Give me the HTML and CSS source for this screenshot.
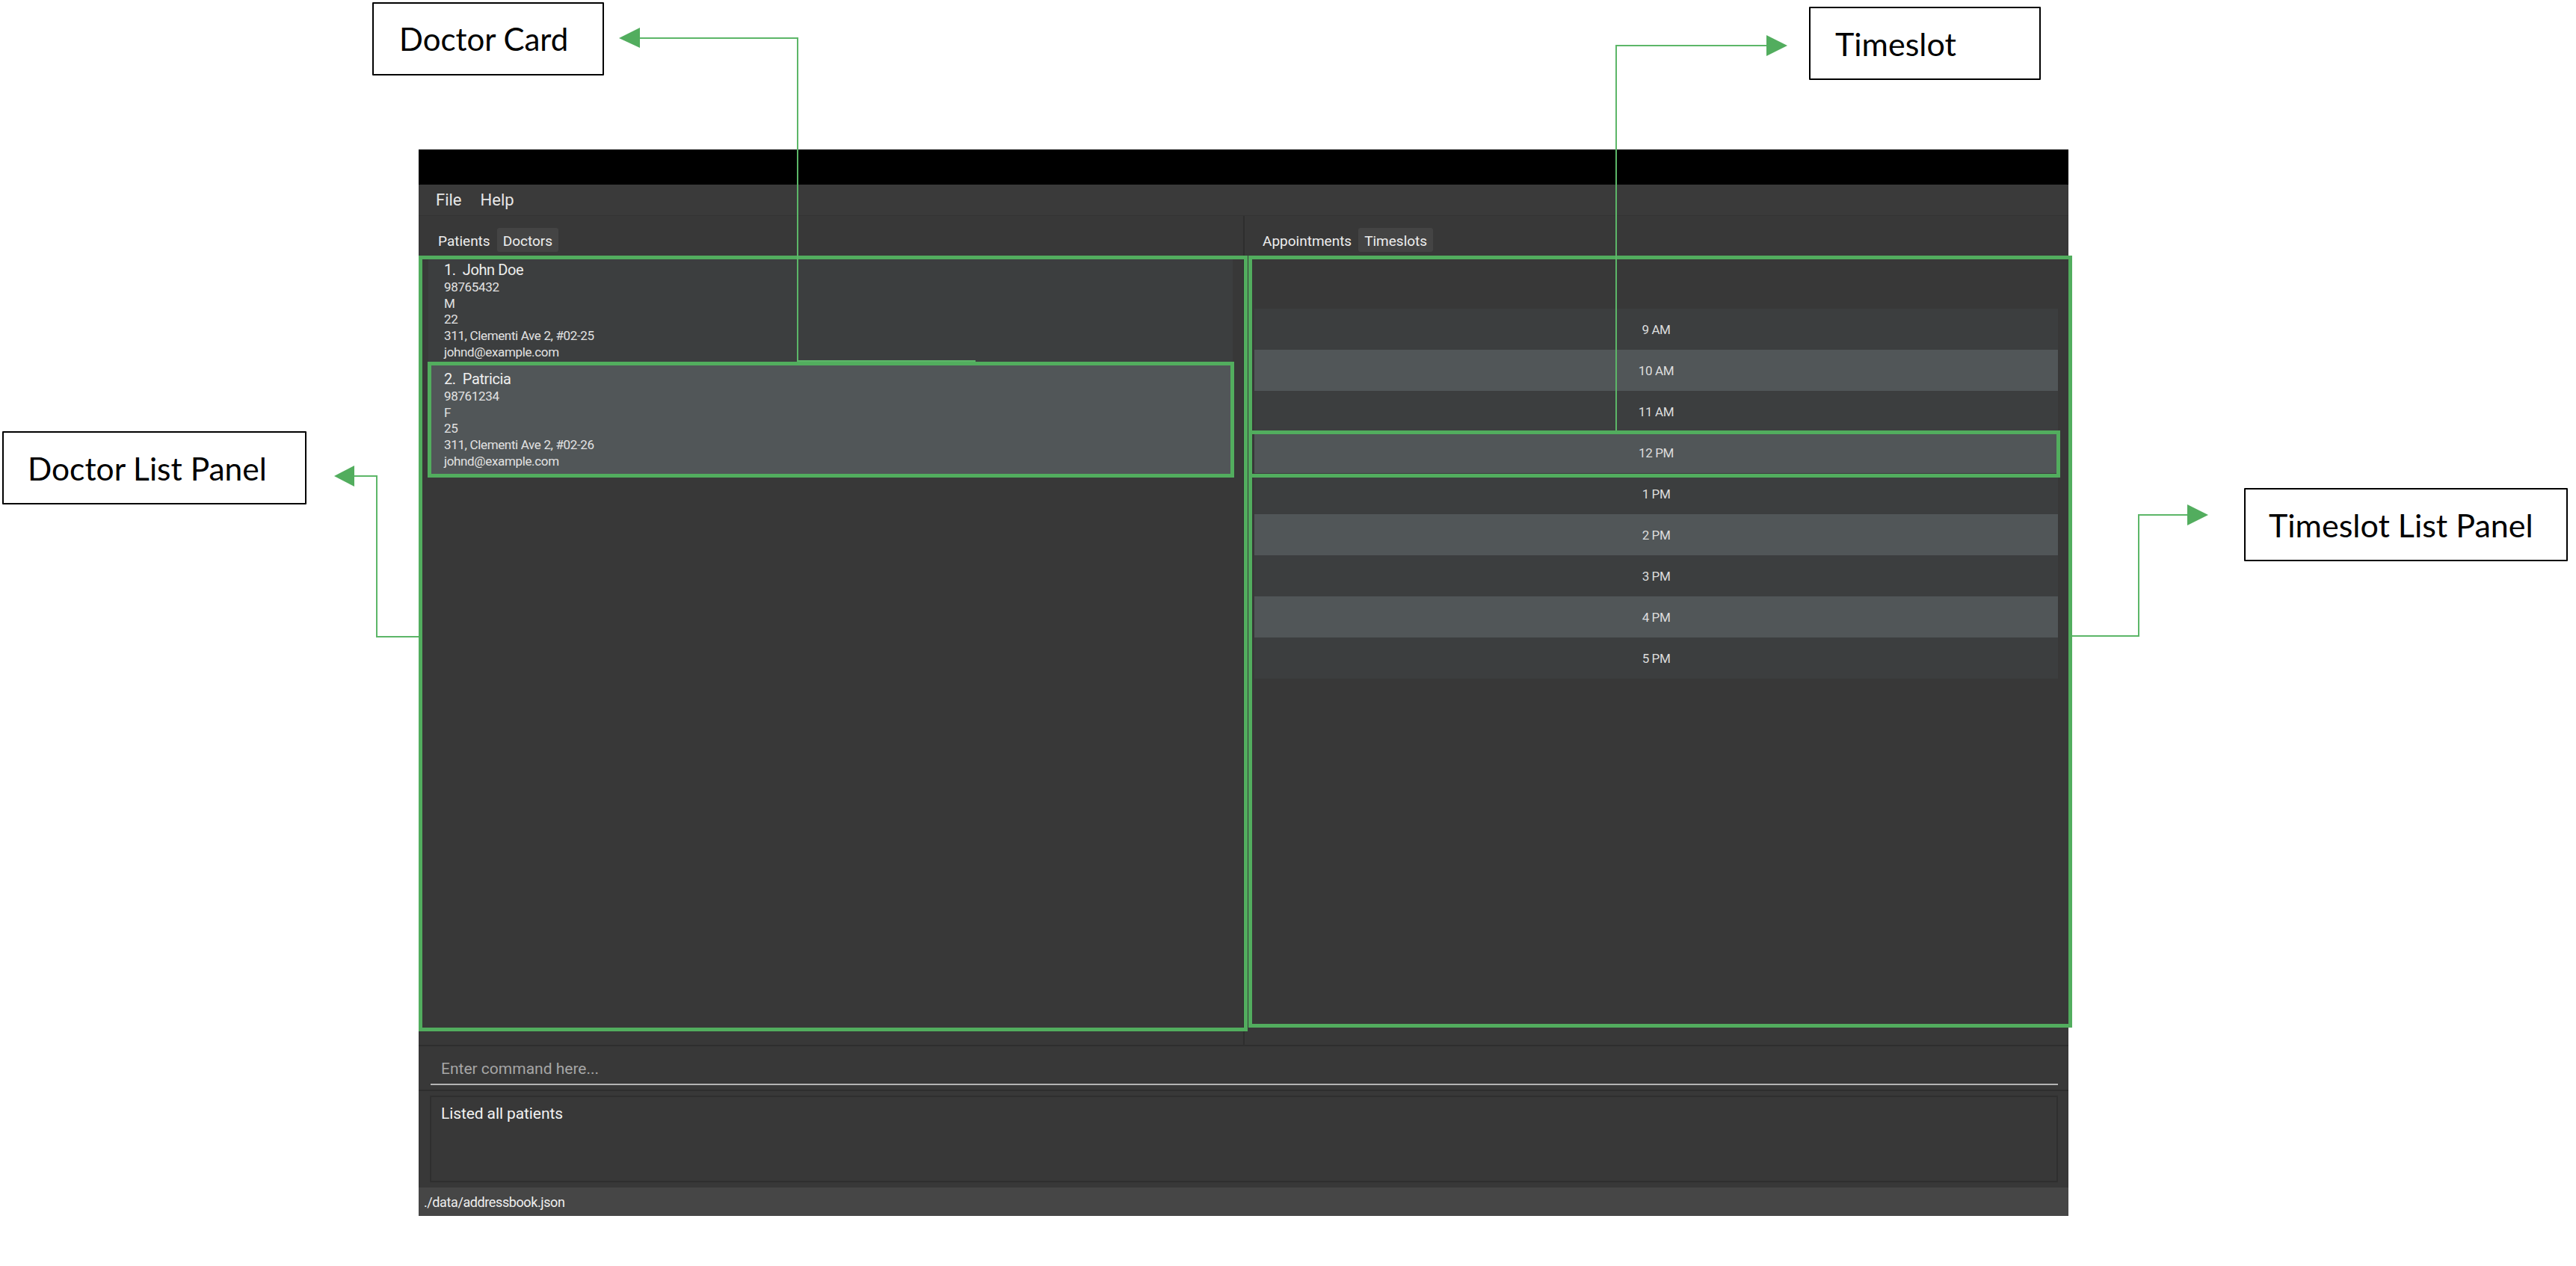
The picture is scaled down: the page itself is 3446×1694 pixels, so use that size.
FILE: index.html
```html
<!DOCTYPE html>
<html lang="en">

<head>
  <meta charset="UTF-8">
  <meta name="viewport" content="width=device-width, initial-scale=1.0">
  <title>Doctor and timeslot panels</title>
  <link rel="stylesheet" href="styles.css">
</head>

<body>
  <div class="stage">

    <div class="app">
      <div class="title-bar"></div>
      <div class="menu-bar">
        <span>File</span>
        <span>Help</span>
      </div>

      <div class="split">
        <div class="pane pane-left">
          <div class="tabs">
            <span class="tab">Patients</span>
            <span class="tab tab-active">Doctors</span>
          </div>
          <div class="card-list">
            <div class="card">
              <div class="card-name">1.&nbsp; John Doe</div>
              <div>98765432</div>
              <div>M</div>
              <div>22</div>
              <div>311, Clementi Ave 2, #02-25</div>
              <div>johnd@example.com</div>
            </div>
            <div class="card card-alt">
              <div class="card-name">2.&nbsp; Patricia</div>
              <div>98761234</div>
              <div>F</div>
              <div>25</div>
              <div>311, Clementi Ave 2, #02-26</div>
              <div>johnd@example.com</div>
            </div>
          </div>
        </div>

        <div class="pane pane-right">
          <div class="tabs">
            <span class="tab">Appointments</span>
            <span class="tab tab-active">Timeslots</span>
          </div>
          <div class="slot-list">
            <div class="slot">9 AM</div>
            <div class="slot slot-alt">10 AM</div>
            <div class="slot">11 AM</div>
            <div class="slot slot-alt">12 PM</div>
            <div class="slot">1 PM</div>
            <div class="slot slot-alt">2 PM</div>
            <div class="slot">3 PM</div>
            <div class="slot slot-alt">4 PM</div>
            <div class="slot">5 PM</div>
          </div>
        </div>
      </div>

      <div class="command-box">
        <div class="command-input">Enter command here...</div>
      </div>
      <div class="result-wrap">
        <div class="result-box">Listed all patients</div>
      </div>
      <div class="status-bar">./data/addressbook.json</div>
    </div>

    <!-- green highlight frames -->
    <div class="frame frame-doctor-list"></div>
    <div class="frame frame-slot-list"></div>
    <div class="frame frame-doctor-card"></div>
    <div class="frame frame-slot"></div>

    <!-- connectors -->
    <svg class="arrows" width="3446" height="1694" viewBox="0 0 3446 1694">
      <g fill="none" stroke="#5cb668" stroke-width="2">
        <polyline points="1305,483 1067,483 1067,51 856,51"/>
        <polyline points="2162,576 2162,61 2363,61"/>
        <polyline points="560,852 504,852 504,637 474,637"/>
        <polyline points="2772,851 2861,851 2861,689 2926,689"/>
      </g>
      <g fill="#52ad5e">
        <polygon points="828,51 856,37 856,64"/>
        <polygon points="2391,61 2363,47 2363,75"/>
        <polygon points="447,637 474,623 474,651"/>
        <polygon points="2954,689 2926,675 2926,703"/>
      </g>
    </svg>

    <!-- labels -->
    <div class="label label-doctor-card">Doctor Card</div>
    <div class="label label-slot">Timeslot</div>
    <div class="label label-doctor-list">Doctor List Panel</div>
    <div class="label label-slot-list">Timeslot List Panel</div>

  </div>
</body>
</html>
```

FILE: styles.css
```css
body {
  margin: 0;
  background-color: #fff;
  font-family: Roboto, "Liberation Sans", sans-serif;
}

.stage {
  position: relative;
  width: 3446px;
  height: 1694px;
  overflow: hidden;
}

/* app window */
.app {
  position: absolute;
  left: 560px;
  top: 200px;
  width: 2207px;
  height: 1427px;
  display: flex;
  flex-direction: column;
  background-color: #383838;
  color: #f0f0f0;
}

.title-bar {
  height: 47px;
  background-color: #000;
}

.menu-bar {
  height: 41px;
  display: flex;
  align-items: center;
  gap: 25px;
  padding-left: 23px;
  font-size: 22px;
  color: #e6e6e6;
  background-color: #3a3a3a;
  border-bottom: 1px solid #333;
}

.split {
  height: 1109px;
  display: flex;
  border-bottom: 2px solid #2e2e2e;
}

.pane {
  display: flex;
  flex-direction: column;
}

.pane-left {
  width: 1103px;
  border-right: 2px solid #2e2e2e;
}

.pane-right {
  flex: 1;
}

.tabs {
  display: flex;
  gap: 1px;
  height: 32px;
  margin-top: 16px;
  font-size: 19px;
  color: #eee;
}

.pane-left .tabs {
  padding-left: 18px;
}

.pane-right .tabs {
  padding-left: 16px;
}

.tab {
  display: flex;
  align-items: center;
  padding: 2px 8px 0;
  border-radius: 3px;
}

.tab-active {
  background-color: #444;
}

.card-list {
  margin: 6px 14px 0 13px;
}

.card {
  height: 146px;
  box-sizing: border-box;
  padding: 5px 0 0 21px;
  font-size: 17px;
  line-height: 21.7px;
  letter-spacing: -0.35px;
  color: #e2e2e2;
  background-color: #3c3e3f;
}

.card-alt {
  background-color: #515658;
}

.card-name {
  font-size: 20px;
  line-height: 26px;
  letter-spacing: -0.4px;
  color: #eee;
}

.slot-list {
  margin: 76px 14px 0 13px;
}

.slot {
  height: 55px;
  display: flex;
  align-items: center;
  justify-content: center;
  font-size: 17px;
  letter-spacing: -0.4px;
  color: #ddd;
  background-color: #3c3e3f;
}

.slot-alt {
  background-color: #515658;
}

.command-box {
  height: 60px;
  box-sizing: border-box;
  padding: 0 14px 0 16px;
  border-bottom: 2px solid #2e2e2e;
}

.command-input {
  height: 52px;
  box-sizing: border-box;
  padding: 12px 0 0 14px;
  font-size: 21px;
  line-height: 36px;
  color: #a6a6a6;
  border-bottom: 2px solid #b4b4b4;
}

.result-wrap {
  flex: 1;
  padding: 6px 14px 7px 15px;
}

.result-box {
  height: 100%;
  box-sizing: border-box;
  padding: 8px 0 0 13px;
  font-size: 21px;
  line-height: 28px;
  letter-spacing: -0.1px;
  color: #f2f2f2;
  border: 2px solid #2f2f2f;
}

.status-bar {
  height: 38px;
  display: flex;
  align-items: center;
  padding-left: 7px;
  font-size: 18px;
  letter-spacing: -0.4px;
  color: #eee;
  background-color: #464646;
}

/* annotations on top of the app */
.frame {
  position: absolute;
  box-sizing: border-box;
  border: 5px solid #52ad5e;
}

.frame-doctor-list {
  left: 560px;
  top: 342px;
  width: 1109px;
  height: 1038px;
}

.frame-slot-list {
  left: 1670px;
  top: 342px;
  width: 1102px;
  height: 1033px;
}

.frame-doctor-card {
  left: 572px;
  top: 484px;
  width: 1079px;
  height: 155px;
}

.frame-slot {
  left: 1670px;
  top: 576px;
  width: 1086px;
  height: 63px;
}

.arrows {
  position: absolute;
  left: 0;
  top: 0;
}

.label {
  position: absolute;
  box-sizing: border-box;
  display: flex;
  align-items: center;
  height: 98px;
  font-family: Lato, "Open Sans", sans-serif;
  font-size: 43px;
  color: #000;
  background-color: #fff;
  border: 2px solid #000;
  border-radius: 1px;
}

.label-doctor-card {
  left: 498px;
  top: 3px;
  width: 310px;
  padding-left: 34px;
  font-size: 42px;
}

.label-slot {
  left: 2420px;
  top: 9px;
  width: 310px;
  padding-left: 33px;
}

.label-doctor-list {
  left: 3px;
  top: 577px;
  width: 407px;
  padding-left: 32px;
  font-size: 42.5px;
}

.label-slot-list {
  left: 3002px;
  top: 653px;
  width: 433px;
  padding-left: 31px;
}
```
